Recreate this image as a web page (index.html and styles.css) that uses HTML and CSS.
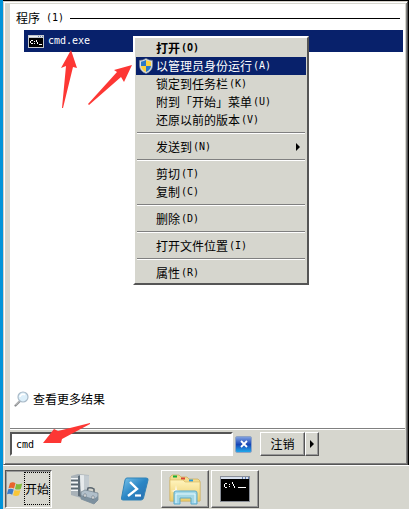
FILE: index.html
```html
<!DOCTYPE html>
<html lang="zh-CN">
<head>
  <meta charset="UTF-8">
  <meta name="viewport" content="width=device-width, initial-scale=1.0">
  <title>开始菜单</title>
  <link rel="stylesheet" href="styles.css">
</head>
<body>
  <div class="desktop">
    <main class="start-menu">
      <section class="results">
        <h1 class="group-title">程序 <span class="latin">(1)</span></h1>
        <a class="result" href="#">
          <svg class="icon-cmd" viewBox="0 0 16 13" shape-rendering="crispEdges">
            <path fill="#c4c8cc" d="M0 0h16v13H0z"/>
            <path fill="#eef1f5" d="M1 1h14v1H1z"/>
            <path fill="#6f86ad" d="M10 1h1v1h-1zM12 1h1v1h-1zM14 1h1v1h-1z"/>
            <path fill="#000" d="M1 3h14v9H1z"/>
            <path fill="#fff" d="M3 5h2v1H3zM2 6h1v2H2zM3 8h2v1H3zM6 6h1v1H6zM6 8h1v1H6zM8 5h1v2H8zM9 7h1v2H9zM11 9h3v1h-3z"/>
          </svg>
          <span class="latin">cmd.exe</span>
        </a>
        <a class="more" href="#">
          <svg class="icon-search" viewBox="0 0 16 16">
            <path d="M6 10L1.500 14.500" stroke="#8b8e90" stroke-width="2.200" stroke-linecap="round"/>
            <path d="M5.500 10L1.500 14" stroke="#ddd" stroke-width=".8"/>
            <circle cx="9" cy="6" r="5" fill="#dceffa" stroke="#a9bac8" stroke-width="1.200"/>
            <path d="M6 6a3 3 0 0 1 5-2" fill="none" stroke="#fff" stroke-width="1.500"/>
          </svg>
          <span>查看更多结果</span>
        </a>
      </section>

      <form class="search-bar">
        <input class="search-input latin" type="text" value="cmd" aria-label="搜索程序和文件">
        <button class="clear" type="button" aria-label="清除">
          <svg viewBox="0 0 8 8"><path d="M1 1l6 6M7 1L1 7" stroke="#fff" stroke-width="1.800"/></svg>
        </button>
        <div class="logoff">
          <button class="btn logoff-btn" type="button">注销</button>
          <button class="btn logoff-more" type="button" aria-label="更多选项"><span class="arrow"></span></button>
        </div>
      </form>
    </main>

    <nav class="taskbar">
      <button class="task start" type="button">
        <svg class="icon-flag" viewBox="0 0 16 16">
          <path fill="#e9632c" d="M3 2q3-1.500 5.500.2L7 7.500Q4.500 6 1.500 7.200z"/>
          <path fill="#83b93b" d="M9.200 2.800q3 1.200 6-.2L13.800 8q-3 1.200-5.800 0z"/>
          <path fill="#3c7bc8" d="M1.200 8.200Q4 7 6.700 8.600l-1.500 5.200Q2.500 12.200 0 13.300z"/>
          <path fill="#f8c638" d="M7.600 9q3 1.200 5.900 0L12 14.300q-3 1.200-6 0z"/>
        </svg>
        <span class="start-label">开始</span>
      </button>
      <button class="task flat" type="button" aria-label="服务器管理器">
        <svg class="icon-server" viewBox="0 0 30 32">
          <path fill="#a9b2b8" d="M1 3l7-2 11 1v19l-8 4L1 22z"/>
          <path fill="#5f6d78" d="M8 3l3-1v22l-3-1z"/>
          <path fill="#c3cbd0" d="M10 2l9 .5V22l-8 2z"/>
          <path fill="#e6eaec" d="M10 2l4 .2V23l-3 1z"/>
          <path stroke="#f4f6f7" d="M1 5.500h7M1 9.500h7M1 13.500h7M1 17.500h7"/>
          <path stroke="#5a6770" d="M1 7.500h7M1 11.500h7M1 15.500h7"/>
          <path fill="none" stroke="#59656e" stroke-width="1.500" d="M17 19l1-4q3-1 6 1v4"/>
          <path fill="#b1bfca" stroke="#71818d" stroke-width=".7" d="M11 19l4-2 13 3v7l-4 4-13-5z"/>
          <path fill="#7d909e" d="M11 22l13 4 4-3v4l-4 4-13-5z"/>
          <path fill="#f4f5f5" stroke="#57626a" stroke-width=".5" d="M14 21h2v3h-2zM22 23h2v3h-2z"/>
        </svg>
      </button>
      <button class="task flat" type="button" aria-label="Windows PowerShell">
        <svg class="icon-ps" viewBox="0 0 28 24">
          <defs>
            <linearGradient id="ps" x2="1" y2="1">
              <stop stop-color="#7cc5ec"/><stop offset=".5" stop-color="#2a86c5"/><stop offset="1" stop-color="#2c6cac"/>
            </linearGradient>
          </defs>
          <path fill="url(#ps)" stroke="#3184b8" d="M6 1h19q2.500 0 2 2l-4.500 18q-.5 2-2.500 2H2q-2 0-1.500-2L4 3q.5-2 2-2z"/>
          <path fill="none" stroke="#fff" stroke-width="2.400" d="M9 5l7 7-9 7"/>
          <path stroke="#fff" stroke-width="2.200" d="M14 18.500h6"/>
        </svg>
      </button>
      <button class="task raised" type="button" aria-label="资源管理器">
        <svg class="icon-folder" viewBox="0 0 32 32">
          <defs>
            <linearGradient id="folder" x2="0" y2="1"><stop stop-color="#fff4bd"/><stop offset="1" stop-color="#edcc69"/></linearGradient>
          </defs>
          <path fill="#f3dc8e" stroke="#c7a347" stroke-width=".6" d="M1 28V4l2-2h7l2 2h6l2 2h9l2 2v20z"/>
          <path fill="#14ae36" d="M4 2.500h4v2H4z"/><path fill="#d94435" d="M12 4.500h4v2h-4z"/><path fill="#269bdd" d="M20 6.500h4v2h-4z"/>
          <path fill="url(#folder)" stroke="#d7b65a" stroke-width=".6" d="M1 7h13l2 2h15v19H1z"/>
          <path fill="#fff" d="M7 12l1 5 4 1-4 1-1 5-1-5-4-1 4-1z" opacity=".8"/>
          <path fill="#9bd8f0" stroke="#4fa5cc" d="M5 31V20q0-2 2-2h19q2 0 2 2v11h-6v-6H11v6z" opacity=".9"/>
          <path fill="none" stroke="#e4f8ff" d="M7 30v-9h19v9"/>
        </svg>
      </button>
      <button class="task raised" type="button" aria-label="命令提示符">
        <svg class="icon-console" viewBox="0 0 30 26" shape-rendering="crispEdges">
          <path fill="#8a8f98" d="M0 0h30v26H0z"/>
          <path fill="#d7e0ee" d="M1 1h28v2H1z"/>
          <path fill="#6582b4" d="M22 1h1v2h-1zM25 1h1v2h-1zM28 1h1v2h-1z"/>
          <path fill="#000" d="M1 3h28v22H1z"/>
          <path fill="#fff" d="M5 7h2v1H5zM4 8h1v3H4zM5 11h2v1H5zM9 8h1v1H9zM9 10h1v1H9zM12 6h1v2h-1zM13 8h1v2h-1zM14 10h1v2h-1zM18 11h8v1h-8z"/>
        </svg>
      </button>
    </nav>

    <div class="context-menu" role="menu">
      <button class="item default" role="menuitem">打开<span class="latin">(O)</span></button>
      <button class="item active" role="menuitem">
        <svg class="icon-shield" viewBox="0 0 14 16">
          <path fill="#d7dde2" stroke="#7c8790" stroke-width=".6" d="M7 .4q3 2 6.500 2v5q0 5.500-6.500 8.200Q.5 13 .5 7.400v-5Q4 2.400 7 .4z"/>
          <path fill="#2a78c8" d="M7 2v6H2V3.700Q5 3.300 7 2zM7 8h5q-.5 4-5 6z"/>
          <path fill="#fbd13c" d="M7 2q2 1.300 5 1.700V8H7zM7 8v6Q2.500 12 2 8z"/>
        </svg>
        以管理员身份运行<span class="latin">(A)</span>
      </button>
      <button class="item" role="menuitem">锁定到任务栏<span class="latin">(K)</span></button>
      <button class="item" role="menuitem">附到「开始」菜单<span class="latin">(U)</span></button>
      <button class="item" role="menuitem">还原以前的版本<span class="latin">(V)</span></button>
      <hr class="separator">
      <button class="item" role="menuitem" aria-haspopup="true">发送到<span class="latin">(N)</span><span class="arrow submenu"></span></button>
      <hr class="separator">
      <button class="item" role="menuitem">剪切<span class="latin">(T)</span></button>
      <button class="item" role="menuitem">复制<span class="latin">(C)</span></button>
      <hr class="separator">
      <button class="item" role="menuitem">删除<span class="latin">(D)</span></button>
      <hr class="separator">
      <button class="item" role="menuitem">打开文件位置<span class="latin">(I)</span></button>
      <hr class="separator">
      <button class="item" role="menuitem">属性<span class="latin">(R)</span></button>
    </div>

    <!-- Pointer arrows -->
    <svg class="pointer pointer-result" viewBox="0 0 18 60"><path fill="#fd3734" d="M11 0l6 18-4-1-10 41H2L6 16l-5 2z"/></svg>
    <svg class="pointer pointer-item" viewBox="0 0 46 42"><path fill="#fd3734" d="M45 1l-8 17-3-5L2 41l-1-1L30 8l-3-2z"/></svg>
    <svg class="pointer pointer-input" viewBox="0 0 50 22"><path fill="#fd3734" d="M0 21L11 7l4 2L47 1v1L19 17l-1 4z"/></svg>
  </div>
</body>
</html>
```

FILE: styles.css
```css
/* Base */
* { box-sizing: border-box; }
body {
  margin: 0;
  font-family: "Noto Sans CJK SC", sans-serif;
  font-size: 12px;
  line-height: 18px;
  color: #000;
}
button, input {
  margin: 0; padding: 0;
  border: 0; border-radius: 0;
  font: inherit; color: inherit;
}
a { color: inherit; text-decoration: none; }
svg { display: block; flex: none; }
.latin {
  font-family: "DejaVu Sans Mono", monospace;
  font-size: 10px;
}

.desktop {
  position: relative;
  display: flex;
  flex-direction: column;
  min-height: 100vh;
  padding: 1px 0 0 3px;
  background: linear-gradient(to right, #0093d9 3px, #000 3px);
}

/* Start menu */
.start-menu {
  flex: 1;
  display: flex;
  flex-direction: column;
  margin-right: 1px;
  border: 1px solid #d4d0c8;
  border-right-color: #555;
  border-bottom-color: #555;
  box-shadow: inset 1px 1px #fff, inset -1px -1px #808080;
  background: #d6d6ce;
}
.results {
  flex: 1;
  display: flex;
  flex-direction: column;
  margin: 2px 2px 0 6px;
  background: #fff;
  border-bottom: 1px solid #808080;
  box-shadow: 0 1px #fff;
}
.group-title {
  display: flex;
  align-items: center;
  gap: 6px;
  margin: 5px 5px 0 6px;
  font-size: 12px;
  font-weight: normal;
}
.group-title::after {
  content: "";
  flex: 1;
  height: 1px;
  background: #000;
}
.result {
  display: flex;
  align-items: center;
  gap: 4px;
  height: 22px;
  margin: 3px 2px 0 14px;
  padding-left: 4px;
  background: #08216b;
  color: #fff;
}
.icon-cmd { width: 16px; height: 13px; }
.more {
  display: flex;
  align-items: center;
  gap: 3px;
  margin: auto 0 20px 4px;
}
.icon-search { width: 16px; height: 16px; }

/* Search row */
.search-bar {
  display: flex;
  align-items: center;
  margin: 3px 0 8px 6px;
}
.search-input {
  width: 223px;
  height: 24px;
  padding-left: 4px;
  border: 2px solid;
  border-color: #555 #fff #fff #555;
  background: #fff;
}
.clear {
  display: flex;
  align-items: center;
  justify-content: center;
  width: 17px;
  height: 17px;
  margin: 0 8px 0 2px;
  border: 1px solid #8fa3c4;
  border-radius: 2px;
  background: linear-gradient(#7e9fe0, #1745b5 50%, #20a8ea);
}
.clear svg { width: 8px; height: 8px; }
.logoff { display: flex; }
.btn {
  height: 24px;
  border: 1px solid;
  border-color: #fff #555 #555 #fff;
  box-shadow: inset -1px -1px #999;
  background: #d6d6ce;
}
.logoff-btn { width: 45px; }
.logoff-more {
  display: flex;
  align-items: center;
  justify-content: center;
  width: 14px;
}
.arrow {
  border: 4px solid transparent;
  border-left-color: currentColor;
  border-right: 0;
}

/* Taskbar */
.taskbar {
  display: flex;
  align-items: center;
  gap: 2px;
  height: 44px;
  padding: 2px 2px 0;
  border-top: 1px solid #fff;
  background: #d6d6ce;
}
.task {
  display: flex;
  align-items: center;
  justify-content: center;
  width: 48px;
  height: 38px;
  background: #d6d6ce;
}
.raised {
  border: 1px solid;
  border-color: #fff #555 #555 #fff;
  box-shadow: inset -1px -1px #999;
}
.start {
  gap: 1px;
  width: 47px;
  margin-right: 7px;
  border: 1px solid;
  border-color: #555 #fff #fff #555;
  box-shadow: inset 1px 1px #999;
}
.start-label {
  height: 33px;
  line-height: 32px;
  border: 1px dotted #000;
}
.icon-flag { width: 16px; height: 16px; }
.icon-server { width: 30px; height: 32px; }
.icon-ps { width: 28px; height: 24px; }
.icon-folder { width: 32px; height: 32px; }
.icon-console { width: 30px; height: 26px; }

/* Context menu */
.context-menu {
  position: absolute;
  top: 36px;
  left: 133px;
  width: 176px;
  padding: 1px;
  border: 2px solid;
  border-color: #fff #555 #555 #fff;
  background: #d6d6ce;
}
.item {
  position: relative;
  display: flex;
  align-items: center;
  gap: 1px;
  width: 100%;
  height: 18px;
  padding-left: 20px;
  background: none;
  text-align: left;
}
.default, .default .latin { font-weight: bold; }
.active { background: #08216b; color: #fff; }
.icon-shield {
  position: absolute;
  left: 3px;
  width: 14px;
  height: 16px;
}
.submenu { margin: 0 6px 0 auto; }
.separator {
  height: 2px;
  margin: 3px 1px 4px;
  border: 0;
  border-top: 1px solid #808080;
  border-bottom: 1px solid #fff;
}

/* Pointers */
.pointer { position: absolute; }
.pointer-result { top: 50px; left: 60px; width: 18px; height: 60px; }
.pointer-item { top: 64px; left: 87px; width: 46px; height: 42px; }
.pointer-input { top: 422px; left: 43px; width: 50px; height: 22px; }
```
